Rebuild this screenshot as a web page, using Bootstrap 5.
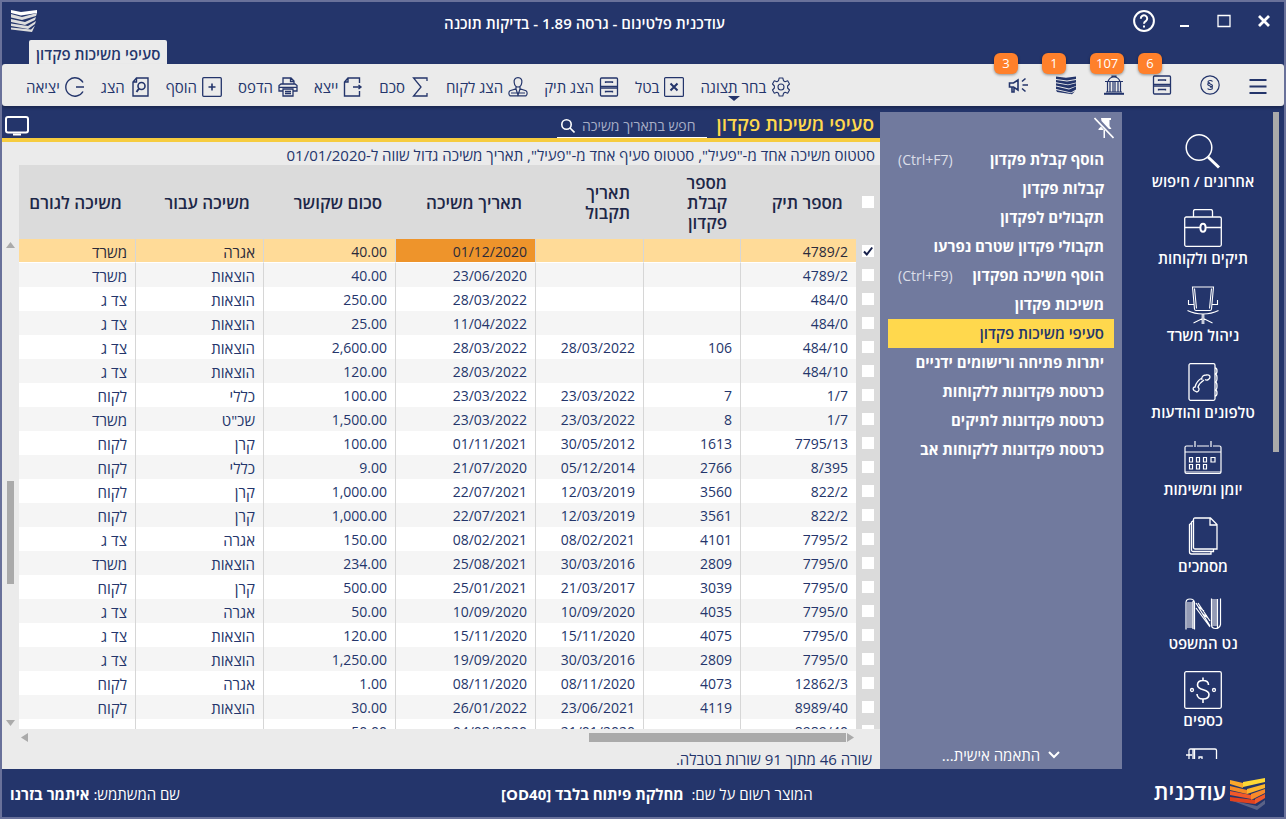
<!DOCTYPE html>
<html lang="he" dir="rtl">
<head>
<meta charset="utf-8">
<meta name="viewport" content="width=device-width, initial-scale=1">
<title>עודכנית פלטינום</title>
<link rel="stylesheet" href="https://cdn.jsdelivr.net/npm/bootstrap@5.3.0/dist/css/bootstrap.min.css">
<style>
:root{--navy:#24356b;--slate:#717a9e;--paper:#ebebeb;--gold:#f6cc3f}
body{font-family:"Open Sans","Noto Sans",sans-serif;font-size:15px;line-height:20px;color:var(--navy);background:var(--navy)}
button{font:inherit;color:inherit;background:none;border:0;padding:0}
svg{display:block;flex:none}
svg:not([stroke="none"]){fill:none;stroke:currentColor}
.app-window{border:2px solid #69719a;background:var(--navy)}
.title-bar{height:38px;padding:0 8px 0 9px;color:#fff}
.title-text{padding-top:4px}
.win-controls{gap:16px}
.win-controls button{width:24px;display:flex;justify-content:center}
.tab-strip{height:24px;padding-left:27px}
.doc-tab{background:var(--paper);color:var(--navy);padding:4px 7px 0;border-radius:2px 2px 0 0;font-weight:600;text-decoration:none}
.tool-bar{height:42px;background:var(--paper);border-radius:3px;padding:0 16px 0 24px;box-shadow:0 2px 3px #0004;z-index:1}
.quick{gap:28px}
.quick .btn-q{width:20px;height:20px;position:relative}
.count{position:absolute;left:-14px;bottom:21px;min-width:24px;height:21px;padding:0 6px;border-radius:6px;background:#ff802b;color:#fff;font-size:13px;line-height:21px;text-align:center;box-shadow:0 1px 3px #0006}
.commands{gap:16px;padding-top:4px}
.commands button{display:flex;align-items:center;gap:5px;position:relative}
.drop-mark{position:absolute;left:28px;top:19px;border:6px solid transparent;border-top:5px solid var(--navy);border-bottom:0}
.main-nav{width:162px;padding:6px 5px 10px 11px}
.nav-thumb{width:6px;height:340px;background:#aaa}
.nav-list{padding-top:20px;gap:18px}
.nav-list a{color:#fff;text-decoration:none;font-weight:600;gap:1px;flex:none}
.side-panel{width:242px;margin-top:6px;padding:0 8px;background:var(--slate);color:#fff}
.pin-row{height:33px}
.side-panel li a{display:flex;justify-content:space-between;height:29px;line-height:29px;padding:0 10px;color:#fff;text-decoration:none;font-weight:700;white-space:nowrap}
.side-panel li a.current{background:#ffd84d;color:var(--navy);font-weight:600}
.side-panel kbd{font:inherit;font-size:14px;font-weight:400;background:none;padding:0;color:#dcdfe9}
.view-head{height:36px;border-bottom:4px solid var(--gold);padding:0 6px 0 3px}
.view-head h1{font-size:19px;line-height:28px;font-weight:600;color:#ffd84d;margin:0}
.search-box{width:150px;border-bottom:1px solid #fff;margin-right:9px;height:24px}
.search-box input{background:none;border:0;outline:0;color:#fff;padding:0;width:116px;font-size:14px}
.search-box input::placeholder{color:#a7aec6;opacity:1}
.screen-btn{padding-bottom:2px}
.view-body{background:var(--paper)}
.filter-line{height:23px;line-height:26px;padding:0 5px}
.v-scroll{width:17px;padding:77px 0 3px}
.thumb{background:#aaa}
.grid{table-layout:fixed;border-collapse:separate;border-spacing:0;width:100%}
.grid th{background:#dbdbdb;color:#1d2748;height:74px;font-size:17px;line-height:20px;font-weight:600;padding:2px 13px 0 6px;vertical-align:middle}
.grid td{height:24px;padding:2px 8px 0;background:#fff;border-left:1px solid #d6d6d6;white-space:nowrap}
.grid td bdi{display:block;font-size:14px;text-align:right}
.grid td:last-child{border-left:0}
.grid tbody tr:nth-child(even) td:not(.pick){background:#f5f5f5}
.grid th.pick,.grid tbody td.pick{background:#dbdbdb;padding:0;border:0}
.grid tr.active td:not(.pick){background:#ffdb98;color:#2b2a3a;border-bottom:1px solid #fff}
.grid tbody tr.active td.focus-cell:not(.pick){background:#ee942b}
.pick input{appearance:none;display:block;width:12px;height:12px;margin:0 auto;background:#fff}
.pick input:checked{background:#fff url("data:image/svg+xml,%3Csvg xmlns='http://www.w3.org/2000/svg' viewBox='0 0 12 12'%3E%3Cpath d='M2 6.500l2.800 3L10.200 2.500' fill='none' stroke='%2316204a' stroke-width='2'/%3E%3C/svg%3E")}
.h-scroll{height:16px;padding:0 26px 0 19px;gap:1px}
.status-line{height:24px;line-height:28px;padding:0 8px}
.foot{height:48px;padding:2px 18px 0 8px;color:#fff}
.brand-name{font-size:22px;line-height:24px;font-weight:600;margin-left:20px;padding-bottom:6px}
</style>
</head>
<body>
<div class="app-window vh-100 d-flex flex-column overflow-hidden">
  <header class="title-bar d-flex align-items-center justify-content-between flex-shrink-0">
    <div class="win-controls d-flex align-items-center">
      <button aria-label="סגירה"><svg width="14" height="14" viewBox="0 0 14 14" stroke-width="2.800"><path d="M2 2l10 10M12 2L2 12"/></svg></button>
      <button aria-label="הגדלה"><svg width="14" height="14" viewBox="0 0 14 14" stroke-width="1.300"><path d="M1 1.500h12v11H1z"/></svg></button>
      <button aria-label="מזעור"><svg width="14" height="14" viewBox="0 0 14 14" stroke-width="2"><path d="M3 12h9"/></svg></button>
      <button aria-label="עזרה"><svg width="22" height="22" viewBox="0 0 22 22" stroke-width="2"><circle cx="11" cy="11" r="9.900"/><path d="M7.800 8.700a3.200 3.200 0 1 1 5 2.500c-1.200.8-1.800 1.300-1.800 2.500M11 15.500v2"/></svg></button>
    </div>
    <div class="title-text fw-semibold">עודכנית פלטינום - גרסה 1.89 - בדיקות תוכנה</div>
    <svg width="26" height="22" viewBox="0 0 26 22" stroke="none" fill="#ddd"><path fill="#fff" d="M0 0l10 2L26 0v3l-16 2.500L0 3z"/><path d="M0 4l11 3 15-4-1 3-14 4L0 7.500z"/><path d="M0 9l14 3 11-5-1 3-10 5L0 12z"/><path d="M0 13.500l17 2.500 8-5-1 3-7 5L0 16z"/><path d="M0 17.500l20 2 4-4-3 6.500L0 19.500z"/></svg>
  </header>
  <div class="tab-strip d-flex justify-content-end flex-shrink-0"><a class="doc-tab" href="#">סעיפי משיכות פקדון</a></div>

  <div class="tool-bar d-flex align-items-center justify-content-between flex-shrink-0 position-relative">
    <div class="quick d-flex align-items-center">
      <button class="btn-q" aria-label="תפריט"><svg width="20" height="20" viewBox="0 0 20 20" stroke-width="2.200"><path d="M1.500 5h17M1.500 11.500h17M1.500 18h17"/></svg></button>
      <button class="btn-q" aria-label="חיובים"><svg width="20" height="20" viewBox="0 0 20 20" stroke-width="1.200"><circle cx="10" cy="10" r="9.200"/><path d="M12.500 6.500c-1-1.500-4.500-1.300-4.500.6 0 2 4.500 1.700 4.500 3.600 0 1-1.500 1.500-2.500 1.300M7.600 13.500c1 1.500 4.800 1.300 4.800-.6 0-2-4.700-1.700-4.700-3.600 0-1 1.200-1.500 2.300-1.300"/></svg></button>
      <button class="btn-q" aria-label="תיקים"><svg width="20" height="20" viewBox="0 0 20 20" stroke-width="1.300"><rect x="1.500" y="1" width="17" height="18" rx="1"/><path d="M1.500 9.300h17M1.500 11h17M6.500 6V5h7v1M6.500 15.500v-1h7v1"/></svg><span class="count">6</span></button>
      <button class="btn-q" aria-label="בנק"><svg width="20" height="20" viewBox="0 0 20 20" stroke-width="1.200"><path d="M1 6.500h18M4 6.500C5 3.500 7 2 10 2s5 1.500 6 4.500M8 2V1h4v1M3.500 7v10M6 7v10M9 7v10M11 7v10M14 7v10M16.500 7v10M2 17h16"/><path d="M0 18.800h20" stroke-width="2"/></svg><span class="count">107</span></button>
      <button class="btn-q" aria-label="ספרים"><svg width="20" height="20" viewBox="0 0 20 20" stroke="none" fill="currentColor"><path d="M0 1.500l10 1.200L20 1.500V4l-9 1.500L0 4zM0 5l11 1.500L20 5v2.500l-8 2L0 7.300zM0 8.300l12 2 8-2V11l-7 2.500L0 10.500zM0 11.500l13 3 7-3v3l-5 3L0 14zM0 15l15 3.300 4-2-3 3L1 17z"/></svg><span class="count">1</span></button>
      <button class="btn-q" aria-label="הודעות"><svg width="20" height="20" viewBox="0 0 20 20" stroke-width="1.600"><path d="M1.500 8H5.500l4.500-3v10l-4.500-3H1.500zM4 12.500V17h2v-4M14.500 10H20M14 6.500l3.500-3M14 13.500l3.500 3"/></svg><span class="count">3</span></button>
    </div>
    <div class="commands d-flex align-items-center" role="toolbar">
      <button><svg width="20" height="20" viewBox="0 0 20 20" stroke-width="1.100"><circle cx="10" cy="10" r="3"/><path d="M8.200 1h3.600l.7 2.700 1.600 1 2.600-.9 1.800 3.200-1.900 2v2l1.900 2-1.800 3.200-2.600-.9-1.600 1-.7 2.700H8.200l-.7-2.700-1.600-1-2.600.9L1.500 13l1.900-2V9L1.500 7l1.800-3.200 2.600.9 1.600-1z" stroke-linejoin="round"/></svg>בחר תצוגה<i class="drop-mark"></i></button>
      <button><svg width="20" height="20" viewBox="0 0 20 20" stroke-width="1.200"><rect x=".6" y=".6" width="18.800" height="18.800" rx="1"/><path d="M6.500 6.500l7 7M13.500 6.500l-7 7" stroke-width="2"/></svg>בטל</button>
      <button><svg width="20" height="20" viewBox="0 0 20 20" stroke-width="1.300"><rect x="1.500" y="1" width="17" height="18" rx="1"/><path d="M1.500 9.300h17M1.500 11h17M6.500 6V5h7v1M6.500 15.500v-1h7v1"/></svg>הצג תיק</button>
      <button><svg width="20" height="20" viewBox="0 0 20 20" stroke-width="1.200"><path d="M10 .7c-3 0-4.300 2-3.800 4.800C6.500 8 8 10 10 10s3.500-2 3.800-4.500C14.300 2.700 13 .7 10 .7zM8 9.500v2.300l-6 2c-1.500 1-1.500 4 0 5h16c1.500-1 1.500-4 0-5l-6-2V9.500M8 12l2 6 2-6M3 16h14"/></svg>הצג לקוח</button>
      <button><svg width="20" height="20" viewBox="0 0 20 20" stroke-width="1.300"><path d="M17 4V1H3.500l7.500 9-7.500 9H17v-3"/></svg>סכם</button>
      <button><svg width="20" height="20" viewBox="0 0 20 20" stroke-width="1.400"><path d="M16.500 6V1H5L1.500 5v14h15v-5M1.500 5H5V1M10 10h8M15.500 8l2.500 2-2.500 2"/></svg>ייצא</button>
      <button><svg width="20" height="20" viewBox="0 0 20 20" stroke-width="1.300"><path d="M5 7V1h8l3 3v3M12.500 1v3.500H16M5 14H1V8.500L3 7h14l2 1.500V14h-4M1 10.300h18M5 12h10v7H5zM7 14.500h6M7 16.500h6"/></svg>הדפס</button>
      <button><svg width="20" height="20" viewBox="0 0 20 20" stroke-width="1.300"><rect x=".7" y=".7" width="18.600" height="18.600" rx="1"/><path d="M10 6.500v7M6.500 10h7" stroke-width="1.600"/></svg>הוסף</button>
      <button><svg width="20" height="20" viewBox="0 0 20 20" stroke-width="1.400"><path d="M6.500 1H18v18H3V5zM3 5h3.500V1"/><circle cx="11.500" cy="9" r="3.500" stroke-width="1.600"/><path d="M9 11.500L6.500 15" stroke-width="2"/></svg>הצג</button>
      <button><svg width="20" height="20" viewBox="0 0 20 20" stroke-width="1.400"><path d="M18 5.500a9.200 9.200 0 1 0 0 9M19 10h-8"/></svg>יציאה</button>
    </div>
  </div>

  <div class="d-flex flex-grow-1" style="min-height:0">
    <nav class="main-nav d-flex flex-shrink-0">
      <div class="nav-thumb flex-shrink-0"></div>
      <div class="nav-list d-flex flex-column flex-grow-1 overflow-hidden">
        <a href="#" class="d-flex flex-column align-items-center"><svg width="38" height="38" viewBox="0 0 38 38" stroke-width="1.500"><circle cx="15" cy="15.500" r="12.800"/><path d="M24 25l11 10.500" stroke-width="3"/></svg>אחרונים / חיפוש</a>
        <a href="#" class="d-flex flex-column align-items-center"><svg width="38" height="38" viewBox="0 0 38 38" stroke-width="1.300"><rect x=".7" y="8" width="36.600" height="29.300" rx="1.500"/><path d="M9.500 8V2.500q0-2 2-2h15q2 0 2 2V8M1 18.500h15M22 18.500h15"/><ellipse cx="19" cy="18.700" rx="2.600" ry="4" stroke-width="2"/></svg>תיקים ולקוחות</a>
        <a href="#" class="d-flex flex-column align-items-center"><svg width="38" height="38" viewBox="0 0 38 38" stroke-width="1.100"><path d="M8.500 1h21l-2 22q-.2 1.500-1.500 1.500H12q-1.300 0-1.500-1.500zM10.500 2.500l2 20M27.500 2.500l-2 20M4.500 14v4.500h5.500M33.500 14v4.500h-5.500M3.500 24.500q7 3.500 15.500 3.500t15.500-3.500M18.200 28v10M19.800 28v10M18.500 32.500L9.500 37M19.500 32.500l9 4.500"/></svg>ניהול משרד</a>
        <a href="#" class="d-flex flex-column align-items-center"><svg width="38" height="38" viewBox="0 0 38 38" stroke-width="1.300"><rect x="5" y=".7" width="26" height="36.600" rx="1.500"/><path d="M31 5q2 0 2 3t-2 3q2 0 2 4t-2 4q2 0 2 4t-2 4q2 0 2 3t-2 3M18 17c-1-3 1-5 4-5 2-.5 4 0 4 2s-3 4-5 2.500M18 15c-4 2-6 5-7 9-2 0-2.500 2-1 3.500l3 1.500c2-1 3-3 1-5 1-3 3-5 6-7"/></svg>טלפונים והודעות</a>
        <a href="#" class="d-flex flex-column align-items-center"><svg width="38" height="38" viewBox="0 0 38 38" stroke-width="1.200"><path d="M9 6H2.500Q1 6 1 7.500V32q0 1.500 1.500 1.500h33Q37 33.500 37 32V7.500Q37 6 35.500 6H29M13 6h12M1 12h36M1 32h36M11 1v6M27 1v6"/><path d="M5.500 17.500h3v4.500h-3zM12.500 17.500h3v4.500h-3zM19.500 17.500h3v4.500h-3zM27 17.500h4v4.500h-4zM5.500 24.500h3v4.500h-3zM12.500 24.500h3v4.500h-3zM19.500 24.500h3v4.500h-3z"/></svg>יומן ומשימות</a>
        <a href="#" class="d-flex flex-column align-items-center"><svg width="38" height="38" viewBox="0 0 38 38" stroke-width="1.300"><path d="M11 1h15.500L33 7.500V32H11Q9.500 32 9.500 30.500v-28Q9.500 1 11 1zM26 1v7h7M9.500 3.500L7.500 5v28q0 1.500 1.500 1.500h20.500V32M7.500 6L5.500 7.500V35q0 2 2 2H27v-2.500"/></svg>מסמכים</a>
        <a href="#" class="d-flex flex-column align-items-center"><svg width="38" height="38" viewBox="0 0 38 38" stroke-width="1.200"><path d="M3 34h6V8H3z" fill="#949bb5" stroke="none"/><path d="M28 5h5v27h-5z" fill="#949bb5" stroke="none"/><path d="M2 35.500V8.500Q2 5 6 5t4.500 3.500v27M9 7v28M12 9l14 23M12 14l14 19M14 9l12 18M27.500 4.500v26q0 4 4 4t5-4v-26M33.500 5v29M15 13l5 4M19 20l5 4"/></svg>נט המשפט</a>
        <a href="#" class="d-flex flex-column align-items-center"><svg width="38" height="38" viewBox="0 0 38 38" stroke-width="1.300"><rect x=".7" y=".7" width="36.600" height="36.600" rx="1.500"/><path d="M24.500 14c0-3-2-4.500-5.500-4.500S13.500 11 13.500 14c0 6 11.500 3.500 11.500 9.500 0 3-2.500 4.500-6 4.500s-6-2-6-5M19 6.500v3M19 28v4" stroke-width="1.600"/><circle cx="8" cy="19" r="1.500"/><circle cx="30" cy="19" r="1.500"/></svg>כספים</a>
        <a href="#" class="d-flex flex-column align-items-center" aria-label="עוד"><svg width="38" height="38" viewBox="0 0 38 38" stroke-width="1.300"><path d="M5 37V2.500Q5 1 6.500 1H31q1.500 0 1.500 1.500V37M9 1v36M10.500 1v36M2 7h6M15 9h3v3h-3z"/></svg></a>
      </div>
    </nav>

    <aside class="side-panel d-flex flex-column flex-shrink-0">
      <div class="pin-row"><button class="d-block" aria-label="נעיצה"><svg width="20" height="28" viewBox="0 0 20 28" stroke-width="1.600"><path d="M.5 6l19 20"/><path d="M7 6h10v2h-1.500v6l2 3H15L7.500 9z" fill="#fff" stroke="none"/><path d="M4.500 17L7 14.500l3 3.500H4.500zM9.500 18H11v8H9.500z" fill="#fff" stroke="none"/></svg></button></div>
      <ul class="list-unstyled m-0 p-0 flex-grow-1">
        <li><a href="#">הוסף קבלת פקדון<kbd dir="ltr">(Ctrl+F7)</kbd></a></li>
        <li><a href="#">קבלות פקדון</a></li>
        <li><a href="#">תקבולים לפקדון</a></li>
        <li><a href="#">תקבולי פקדון שטרם נפרעו</a></li>
        <li><a href="#">הוסף משיכה מפקדון<kbd dir="ltr">(Ctrl+F9)</kbd></a></li>
        <li><a href="#">משיכות פקדון</a></li>
        <li><a href="#" class="current">סעיפי משיכות פקדון</a></li>
        <li><a href="#">יתרות פתיחה ורישומים ידניים</a></li>
        <li><a href="#">כרטסת פקדונות ללקוחות</a></li>
        <li><a href="#">כרטסת פקדונות לתיקים</a></li>
        <li><a href="#">כרטסת פקדונות ללקוחות אב</a></li>
      </ul>
      <button class="d-flex align-items-center justify-content-center gap-2 pb-1"><svg width="12" height="12" viewBox="0 0 12 12" stroke-width="2"><path d="M1 3l5 5 5-5"/></svg>התאמה אישית...</button>
    </aside>

    <main class="d-flex flex-column flex-grow-1 overflow-hidden">
      <div class="view-head d-flex align-items-end flex-shrink-0">
        <h1>סעיפי משיכות פקדון</h1>
        <label class="search-box d-flex align-items-center justify-content-end gap-1 ps-1"><input type="text" placeholder="חפש בתאריך משיכה" aria-label="חפש בתאריך משיכה"><svg class="text-white" width="14" height="14" viewBox="0 0 14 14" stroke-width="1.600"><circle cx="5.500" cy="5.500" r="4.700"/><path d="M9 9l4.500 4.500"/></svg></label>
        <button class="screen-btn me-auto text-white" aria-label="תצוגת מסך"><svg width="24" height="20" viewBox="0 0 24 20" stroke-width="2"><rect x="1" y="1" width="22" height="15.500" rx="2"/><path d="M8 18.500h8"/></svg></button>
      </div>
      <div class="view-body d-flex flex-column flex-grow-1" style="min-height:0">
        <div class="filter-line">סטטוס משיכה אחד מ-"פעיל", סטטוס סעיף אחד מ-"פעיל", תאריך משיכה גדול שווה ל-01/01/2020</div>
        <div class="d-flex flex-grow-1" style="min-height:0">
          <div class="flex-grow-1 overflow-hidden">
            <table class="grid">
              <colgroup><col style="width:24px"><col style="width:116px"><col style="width:97px"><col style="width:108px"><col style="width:140px"><col style="width:132px"><col style="width:128px"><col></colgroup>
              <thead><tr><th class="pick"><input type="checkbox" aria-label="בחירת הכל"></th><th>מספר תיק</th><th>מספר קבלת פקדון</th><th>תאריך תקבול</th><th>תאריך משיכה</th><th>סכום שקושר</th><th>משיכה עבור</th><th>משיכה לגורם</th></tr></thead>
              <tbody id="rows"></tbody>
            </table>
          </div>
          <div class="v-scroll d-flex flex-column align-items-center flex-shrink-0">
            <svg width="9" height="6" viewBox="0 0 9 6" stroke="none" fill="#aaa"><path d="M0 6h9L4.500 0z"/></svg>
            <div style="flex:233"></div><div class="thumb" style="flex:103;width:7px"></div><div style="flex:136"></div>
            <svg width="9" height="6" viewBox="0 0 9 6" stroke="none" fill="#aaa"><path d="M0 0h9L4.500 6z"/></svg>
          </div>
        </div>
        <div class="h-scroll d-flex align-items-center flex-shrink-0">
          <svg width="7" height="9" viewBox="0 0 7 9" stroke="none" fill="#aaa"><path d="M0 0v9l7-4.500z"/></svg>
          <div class="thumb" style="flex:257;height:9px"></div><div style="flex:560"></div>
          <svg width="7" height="9" viewBox="0 0 7 9" stroke="none" fill="#aaa"><path d="M7 0v9L0 4.500z"/></svg>
        </div>
        <div class="status-line flex-shrink-0">שורה 46 מתוך 91 שורות בטבלה.</div>
      </div>
    </main>
  </div>

  <footer class="foot d-flex align-items-center justify-content-between flex-shrink-0">
    <div class="d-flex align-items-center gap-1">
      <svg width="36" height="32" viewBox="0 0 36 32" stroke="none"><path fill="#5a6287" d="M0 22l27 6 8-6v4l-8 6z"/><path fill="#f9a72b" d="M0 2l13 3v5L0 6z"/><path fill="#fdd835" d="M13 4l22-4v4L13 9z"/><path fill="#f58a25" d="M0 8l17 4v4L0 12z"/><path fill="#fbb52c" d="M17 11l18-5v4l-18 6z"/><path fill="#f2592a" d="M0 13l21 4v4L0 17z"/><path fill="#f78a2a" d="M21 16l14-5v4l-14 7z"/><path fill="#e0421f" d="M0 19l25 3v4L0 23z"/><path fill="#f2592a" d="M25 21l10-5v4l-10 6z"/></svg>
      <span class="brand-name">עודכנית</span>
    </div>
    <div>המוצר רשום על שם:&nbsp; <b>מחלקת פיתוח בלבד [OD40]</b></div>
    <div>שם המשתמש: <b>איתמר בזרנו</b></div>
  </footer>
</div>
<script>
const data = [
['4789/2','','','01/12/2020','40.00','אגרה','משרד'],
['4789/2','','','23/06/2020','40.00','הוצאות','משרד'],
['484/0','','','28/03/2022','250.00','הוצאות','צד ג'],
['484/0','','','11/04/2022','25.00','הוצאות','צד ג'],
['484/10','106','28/03/2022','28/03/2022','2,600.00','הוצאות','צד ג'],
['484/10','','','28/03/2022','120.00','הוצאות','צד ג'],
['1/7','7','23/03/2022','23/03/2022','100.00','כללי','לקוח'],
['1/7','8','23/03/2022','23/03/2022','1,500.00','שכ"ט','משרד'],
['7795/13','1613','30/05/2012','01/11/2021','100.00','קרן','לקוח'],
['8/395','2766','05/12/2014','21/07/2020','9.00','כללי','לקוח'],
['822/2','3560','12/03/2019','22/07/2021','1,000.00','קרן','לקוח'],
['822/2','3561','12/03/2019','22/07/2021','1,000.00','קרן','לקוח'],
['7795/2','4101','08/02/2021','08/02/2021','150.00','אגרה','צד ג'],
['7795/0','2809','30/03/2016','25/08/2021','234.00','הוצאות','משרד'],
['7795/0','3039','21/03/2017','25/01/2021','500.00','קרן','לקוח'],
['7795/0','4035','10/09/2020','10/09/2020','50.00','אגרה','צד ג'],
['7795/0','4075','15/11/2020','15/11/2020','120.00','הוצאות','צד ג'],
['7795/0','2809','30/03/2016','19/09/2020','1,250.00','הוצאות','צד ג'],
['12862/3','4073','08/11/2020','08/11/2020','1.00','אגרה','לקוח'],
['8989/40','4119','23/06/2021','26/01/2022','30.00','הוצאות','לקוח'],
['8989/40','','21/01/2020','04/08/2020','50.00','','']
];
document.getElementById('rows').innerHTML = data.map((r, i) =>
  `<tr class="${i ? '' : 'active'}"><td class="pick"><input type="checkbox" aria-label="בחירת שורה ${i + 1}" ${i ? '' : 'checked'}></td>` +
  r.map((c, k) => `<td class="${!i && k === 3 ? 'focus-cell' : ''}">${k < 5 ? `<bdi dir="ltr">${c}</bdi>` : c}</td>`).join('') + '</tr>').join('');
</script>
<script src="https://cdn.jsdelivr.net/npm/bootstrap@5.3.0/dist/js/bootstrap.bundle.min.js"></script>
</body>
</html>
